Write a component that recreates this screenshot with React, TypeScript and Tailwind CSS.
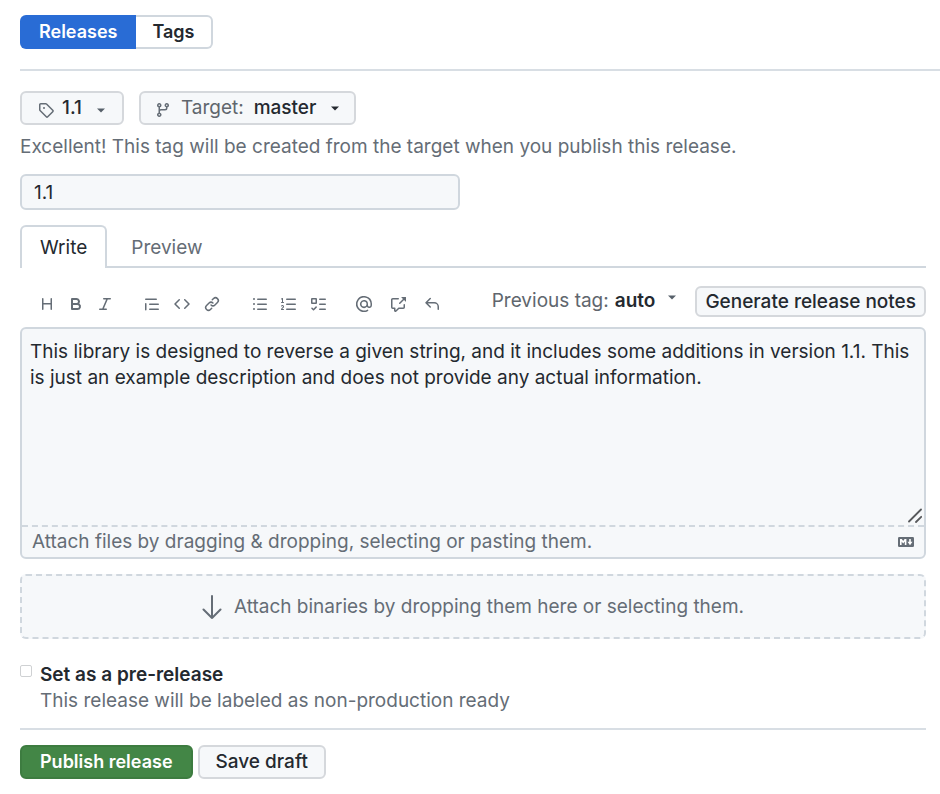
import { useState } from "react";

const DESCRIPTION =
  "This library is designed to reverse a given string, and it includes some additions in version 1.1. This is just an example description and does not provide any actual information.";

const ICONS = {
  tag: "M1 7.775V2.75C1 1.784 1.784 1 2.75 1h5.025c.464 0 .91.184 1.238.513l6.25 6.25a1.75 1.75 0 0 1 0 2.474l-5.026 5.026a1.75 1.75 0 0 1-2.474 0l-6.25-6.25A1.752 1.752 0 0 1 1 7.775Zm1.5 0c0 .066.026.13.073.177l6.25 6.25a.25.25 0 0 0 .354 0l5.025-5.025a.25.25 0 0 0 0-.354l-6.25-6.25a.25.25 0 0 0-.177-.073H2.75a.25.25 0 0 0-.25.25ZM6 5a1 1 0 1 1 0 2 1 1 0 0 1 0-2Z",
  branch: "M9.5 3.25a2.25 2.25 0 1 1 3 2.122V6A2.5 2.5 0 0 1 10 8.5H6a1 1 0 0 0-1 1v1.128a2.251 2.251 0 1 1-1.5 0V5.372a2.25 2.25 0 1 1 1.5 0v1.836A2.493 2.493 0 0 1 6 7h4a1 1 0 0 0 1-1v-.628A2.25 2.25 0 0 1 9.5 3.25Zm-6 0a.75.75 0 1 0 1.5 0 .75.75 0 0 0-1.5 0Zm8.25-.75a.75.75 0 1 0 0 1.5.75.75 0 0 0 0-1.5ZM4.25 12a.75.75 0 1 0 0 1.5.75.75 0 0 0 0-1.5Z",
  heading: "M3.75 2a.75.75 0 0 1 .75.75V7h7V2.75a.75.75 0 0 1 1.5 0v10.5a.75.75 0 0 1-1.5 0V8.5h-7v4.75a.75.75 0 0 1-1.5 0V2.75A.75.75 0 0 1 3.75 2Z",
  bold: "M4 2h4.5a3.501 3.501 0 0 1 2.852 5.53A3.499 3.499 0 0 1 9.5 14H4a1 1 0 0 1-1-1V3a1 1 0 0 1 1-1Zm1 7v3h4.5a1.5 1.5 0 0 0 0-3Zm3.5-2a1.5 1.5 0 0 0 0-3H5v3Z",
  italic: "M6 2.75A.75.75 0 0 1 6.75 2h6.5a.75.75 0 0 1 0 1.5h-2.505l-3.858 9H9.25a.75.75 0 0 1 0 1.5h-6.5a.75.75 0 0 1 0-1.5h2.505l3.858-9H6.75A.75.75 0 0 1 6 2.75Z",
  quote: "M1.75 2.5h10.5a.75.75 0 0 1 0 1.5H1.75a.75.75 0 0 1 0-1.5Zm4 5h8.5a.75.75 0 0 1 0 1.5h-8.5a.75.75 0 0 1 0-1.5Zm0 5h8.5a.75.75 0 0 1 0 1.5h-8.5a.75.75 0 0 1 0-1.5ZM2.5 7.75v6a.75.75 0 0 1-1.5 0v-6a.75.75 0 0 1 1.5 0Z",
  code: "m11.28 3.22 4.25 4.25a.75.75 0 0 1 0 1.06l-4.25 4.25a.749.749 0 0 1-1.275-.326.749.749 0 0 1 .215-.734L13.94 8l-3.72-3.72a.749.749 0 0 1 .326-1.275.749.749 0 0 1 .734.215Zm-6.56 0a.751.751 0 0 1 1.042.018.751.751 0 0 1 .018 1.042L2.06 8l3.72 3.72a.749.749 0 0 1-.326 1.275.749.749 0 0 1-.734-.215L.47 8.53a.75.75 0 0 1 0-1.06Z",
  link: "m7.775 3.275 1.25-1.25a3.5 3.5 0 1 1 4.95 4.95l-2.5 2.5a3.5 3.5 0 0 1-4.95 0 .751.751 0 0 1 .018-1.042.751.751 0 0 1 1.042-.018 1.998 1.998 0 0 0 2.83 0l2.5-2.5a2.002 2.002 0 0 0-2.83-2.83l-1.25 1.25a.751.751 0 0 1-1.042-.018.751.751 0 0 1-.018-1.042Zm-4.69 9.64a1.998 1.998 0 0 0 2.83 0l1.25-1.25a.751.751 0 0 1 1.042.018.751.751 0 0 1 .018 1.042l-1.25 1.25a3.5 3.5 0 1 1-4.95-4.95l2.5-2.5a3.5 3.5 0 0 1 4.95 0 .751.751 0 0 1-.018 1.042.751.751 0 0 1-1.042.018 1.998 1.998 0 0 0-2.83 0l-2.5 2.5a1.998 1.998 0 0 0 0 2.83Z",
  bullets: "M5.75 2.5h8.5a.75.75 0 0 1 0 1.5h-8.5a.75.75 0 0 1 0-1.5Zm0 5h8.5a.75.75 0 0 1 0 1.5h-8.5a.75.75 0 0 1 0-1.5Zm0 5h8.5a.75.75 0 0 1 0 1.5h-8.5a.75.75 0 0 1 0-1.5ZM2 14a1 1 0 1 1 0-2 1 1 0 0 1 0 2Zm1-6a1 1 0 1 1-2 0 1 1 0 0 1 2 0ZM2 4a1 1 0 1 1 0-2 1 1 0 0 1 0 2Z",
  numbers: "M5 3.25a.75.75 0 0 1 .75-.75h8.5a.75.75 0 0 1 0 1.5h-8.5A.75.75 0 0 1 5 3.25Zm0 5a.75.75 0 0 1 .75-.75h8.5a.75.75 0 0 1 0 1.5h-8.5A.75.75 0 0 1 5 8.25Zm0 5a.75.75 0 0 1 .75-.75h8.5a.75.75 0 0 1 0 1.5h-8.5a.75.75 0 0 1-.75-.75ZM.924 10.32a.5.5 0 0 1-.851-.525l.001-.001.001-.002.002-.004.007-.011c.097-.144.215-.273.348-.384.228-.19.588-.392 1.068-.392.468 0 .858.181 1.126.484.259.294.377.673.377 1.038 0 .987-.686 1.495-1.156 1.845l-.047.035c-.303.225-.522.4-.654.597h1.357a.5.5 0 0 1 0 1H.5a.5.5 0 0 1-.5-.5c0-1.005.692-1.52 1.167-1.875l.035-.025c.531-.396.8-.625.8-1.078a.57.57 0 0 0-.128-.376C1.806 10.068 1.695 10 1.5 10a.658.658 0 0 0-.429.163.835.835 0 0 0-.144.153ZM2.003 2.5V6h.503a.5.5 0 0 1 0 1H.5a.5.5 0 0 1 0-1h.503V3.308l-.28.14a.5.5 0 0 1-.446-.895l1.003-.5a.5.5 0 0 1 .723.447Z",
  tasks: "M2 2h4a1 1 0 0 1 1 1v4a1 1 0 0 1-1 1H2a1 1 0 0 1-1-1V3a1 1 0 0 1 1-1Zm4.655 8.595a.75.75 0 0 1 0 1.06L4.03 14.28a.75.75 0 0 1-1.06 0l-1.5-1.5a.749.749 0 0 1 .326-1.275.749.749 0 0 1 .734.215l.97.97 2.095-2.095a.75.75 0 0 1 1.06 0ZM9.75 2.5h5.5a.75.75 0 0 1 0 1.5h-5.5a.75.75 0 0 1 0-1.5Zm0 5h5.5a.75.75 0 0 1 0 1.5h-5.5a.75.75 0 0 1 0-1.5Zm0 5h5.5a.75.75 0 0 1 0 1.5h-5.5a.75.75 0 0 1 0-1.5Zm-7.25-9v3h3v-3Z",
  mention: "M4.75 2.37a6.501 6.501 0 0 0 6.5 11.26.75.75 0 0 1 .75 1.298A7.999 7.999 0 0 1 .989 4.148 8 8 0 0 1 16 7.75v1.5a2.75 2.75 0 0 1-5.072 1.475 3.999 3.999 0 0 1-6.65-4.19A4 4 0 0 1 12 8v1.25a1.25 1.25 0 0 0 2.5 0V7.867a6.5 6.5 0 0 0-9.75-5.496ZM10.5 8a2.5 2.5 0 1 0-5 0 2.5 2.5 0 0 0 5 0Z",
  reference: "M2.75 3.5a.25.25 0 0 0-.25.25v7.5c0 .138.112.25.25.25h2a.75.75 0 0 1 .75.75v2.19l2.72-2.72a.749.749 0 0 1 .53-.22h4.5a.25.25 0 0 0 .25-.25v-2.5a.75.75 0 0 1 1.5 0v2.5A1.75 1.75 0 0 1 13.25 13H9.06l-2.573 2.573A1.458 1.458 0 0 1 4 14.543V13H2.75A1.75 1.75 0 0 1 1 11.25v-7.5C1 2.784 1.784 2 2.75 2h5.5a.75.75 0 0 1 0 1.5ZM16 1.25v4.146a.25.25 0 0 1-.427.177L14.03 4.03l-3.75 3.75a.749.749 0 0 1-1.275-.326.749.749 0 0 1 .215-.734l3.75-3.75-1.543-1.543A.25.25 0 0 1 11.604 1h4.146a.25.25 0 0 1 .25.25Z",
  reply: "M6.78 1.97a.75.75 0 0 1 0 1.06L3.81 6h6.44A4.75 4.75 0 0 1 15 10.75v2.5a.75.75 0 0 1-1.5 0v-2.5a3.25 3.25 0 0 0-3.25-3.25H3.81l2.97 2.97a.749.749 0 0 1-.326 1.275.749.749 0 0 1-.734-.215L1.47 7.28a.75.75 0 0 1 0-1.06l4.25-4.25a.75.75 0 0 1 1.06 0Z",
};

type IconName = keyof typeof ICONS;

function Icon({ name, className = "" }: { name: IconName; className?: string }) {
  return (
    <svg className={`size-4 shrink-0 ${className}`} viewBox="0 0 16 16" fill="currentColor" aria-hidden="true">
      <path d={ICONS[name]} />
    </svg>
  );
}

function Caret({ className = "" }: { className?: string }) {
  return (
    <svg className={className} width="10" height="5" viewBox="0 0 10 5" fill="currentColor" aria-hidden="true">
      <path d="M1 0.5h8L5 4.5z" />
    </svg>
  );
}

const TOOL_GROUPS: { group: string; item: string; tools: [IconName, string][] }[] = [
  { group: "mr-[18px]", item: "w-[29px]", tools: [["heading", "Heading"], ["bold", "Bold"], ["italic", "Italic"]] },
  { group: "mr-[18px]", item: "w-[30px]", tools: [["quote", "Quote"], ["code", "Code"], ["link", "Link"]] },
  { group: "mr-[15px]", item: "w-[29px]", tools: [["bullets", "Unordered list"], ["numbers", "Ordered list"], ["tasks", "Task list"]] },
  { group: "", item: "w-[34px]", tools: [["mention", "Mention"], ["reference", "Reference"], ["reply", "Saved replies"]] },
];

function MarkdownMark() {
  return (
    <svg width="16" height="10" viewBox="0 0 16 10" aria-hidden="true">
      <rect width="16" height="10" rx="1.2" fill="#656d76" />
      <path d="M2 8V2h1.8l1.4 1.9L6.6 2h1.8v6H6.8V4.6L5.2 6.5 3.6 4.6V8z" fill="#fff" />
      <path d="M11.2 2h1.6v2.7h1.7L12 8.2 9.500 4.700h1.700z" fill="#fff" />
    </svg>
  );
}

export default function App() {
  const [body, setBody] = useState(DESCRIPTION);
  const [title, setTitle] = useState("1.1");

  return (
    <main className="bg-white pl-5 pt-[15px] pb-[15px] font-['Inter','Liberation_Sans',sans-serif] text-[19px] leading-[26px] text-[#24292f]">
      <nav className="flex h-[34px] text-lg font-semibold">
        <a href="#releases" className="flex items-center rounded-l-md bg-[#296cd5] px-[19px] text-white">
          Releases
        </a>
        <a href="#tags" className="flex items-center rounded-r-md border-2 border-l-0 border-[#d0d7de] px-4">
          Tags
        </a>
      </nav>
      <hr className="mt-5 border-t-2 border-[#d8dee4]" />

      <form className="mr-3.5" onSubmit={(e) => e.preventDefault()}>
        <div className="mt-5 flex gap-[15px] font-medium">
          <button type="button" aria-haspopup="menu" className="flex h-[34px] items-center rounded-md border-2 border-[#d5d8dc] bg-[#f6f8fa] px-4">
            <Icon name="tag" className="mt-1 mr-2 text-[#656d76]" />
            1.1
            <Caret className="mt-1 ml-3.5 text-[#57606a]" />
          </button>
          <button type="button" aria-haspopup="menu" className="flex h-[34px] items-center rounded-md border-2 border-[#d5d8dc] bg-[#f6f8fa] px-3.5">
            <Icon name="branch" className="mt-1 mr-2.5 text-[#656d76]" />
            <span className="mr-2.5 font-normal text-[#60666d]">Target:</span>
            master
            <Caret className="ml-3.5" />
          </button>
        </div>
        <p className="mt-[9px] text-[#656d76]">
          Excellent! This tag will be created from the target when you publish this release.
        </p>

        <input
          type="text"
          aria-label="Release title"
          value={title}
          onChange={(e) => setTitle(e.target.value)}
          className="mt-3.5 block h-9 w-full max-w-[440px] rounded-md border-2 border-[#d0d7de] bg-[#f6f8fa] px-3 outline-none"
        />

        <div role="tablist" className="mt-[15px] flex h-[43px] border-b-2 border-[#d0d7de]">
          <button type="button" role="tab" aria-selected="true" className="-mb-0.5 rounded-t-md border-2 border-b-0 border-[#d0d7de] bg-white px-[18px]">
            Write
          </button>
          <button type="button" role="tab" aria-selected="false" className="-mb-0.5 border-t-2 border-transparent px-6 text-[#656d76]">
            Preview
          </button>
        </div>

        <div className="mt-[18px] flex items-start justify-between">
          <div className="flex pt-0.5 pl-3 text-[#656d76]">
            {TOOL_GROUPS.map(({ group, item, tools }) => (
              <div key={tools[0][0]} className={`flex ${group}`}>
                {tools.map(([name, label]) => (
                  <button key={name} type="button" aria-label={label} className={`flex h-8 items-center justify-center ${item}`}>
                    <Icon name={name} />
                  </button>
                ))}
              </div>
            ))}
          </div>
          <div className="flex items-start">
            <button type="button" aria-haspopup="menu" className="mt-0.5 mr-[18px] flex h-[26px] items-center whitespace-nowrap">
              <span className="mr-1.5 text-[#60666d]">Previous tag:</span>
              <span className="font-semibold">auto</span>
              <Caret className="mb-2 ml-3 text-[#57606a]" />
            </button>
            <button type="button" className="flex h-[31px] items-center rounded-md border-2 border-[#d5d8dc] bg-[#f6f8fa] px-2 font-medium whitespace-nowrap">
              Generate release notes
            </button>
          </div>
        </div>

        <div className="mt-[7px] rounded-md border-2 border-[#d0d7de] bg-[#f6f8fa]">
          <div className="relative">
            <textarea
              aria-label="Release description"
              value={body}
              onChange={(e) => setBody(e.target.value)}
              className="block h-[196px] w-full resize-none bg-transparent px-2 pt-2.5 outline-none"
            />
            <svg className="absolute right-0.5 bottom-0.5" width="15" height="15" viewBox="0 0 15 15" stroke="#57595c" strokeWidth="1.8" strokeLinecap="round" aria-hidden="true">
              <path d="M2 13.500l12-12M9 14l5.200-5.200" />
            </svg>
          </div>
          <div className="flex h-8 items-center justify-between border-t-2 border-dashed border-[#d0d7de] px-2.5 text-[#656d76]">
            <span>Attach files by dragging &amp; dropping, selecting or pasting them.</span>
            <MarkdownMark />
          </div>
        </div>

        <button type="button" className="mt-[15px] flex h-[65px] w-full items-center justify-center rounded-md border-2 border-dashed border-[#d0d7de] bg-[#f6f8fa] text-[#656d76]">
          <svg className="mr-3" width="20" height="24" viewBox="0 0 20 24" fill="none" stroke="currentColor" strokeWidth="2" strokeLinecap="round" strokeLinejoin="round" aria-hidden="true">
            <path d="M10 1v22M1.500 14.500L10 23l8.500-8.500" />
          </svg>
          Attach binaries by dropping them here or selecting them.
        </button>

        <div className="mt-[23px] flex items-start">
          <input id="prerelease" type="checkbox" className="mt-[3px] mr-2 size-3 appearance-none rounded-[2px] border border-[#cfd1d3] bg-white" />
          <div>
            <label htmlFor="prerelease" className="block font-semibold">Set as a pre-release</label>
            <p className="text-[#656d76]">This release will be labeled as non-production ready</p>
          </div>
        </div>

        <hr className="mt-3.5 border-t-2 border-[#d8dee4]" />
        <div className="mt-[15px] flex gap-[5px]">
          <button type="submit" className="flex h-[34px] items-center rounded-md border-2 border-[#3d7c40] bg-[#438646] px-[18px] text-lg font-semibold text-white">
            Publish release
          </button>
          <button type="button" className="flex h-[34px] items-center rounded-md border-2 border-[#d5d8dc] bg-[#f6f8fa] px-4 font-medium">
            Save draft
          </button>
        </div>
      </form>
    </main>
  );
}
